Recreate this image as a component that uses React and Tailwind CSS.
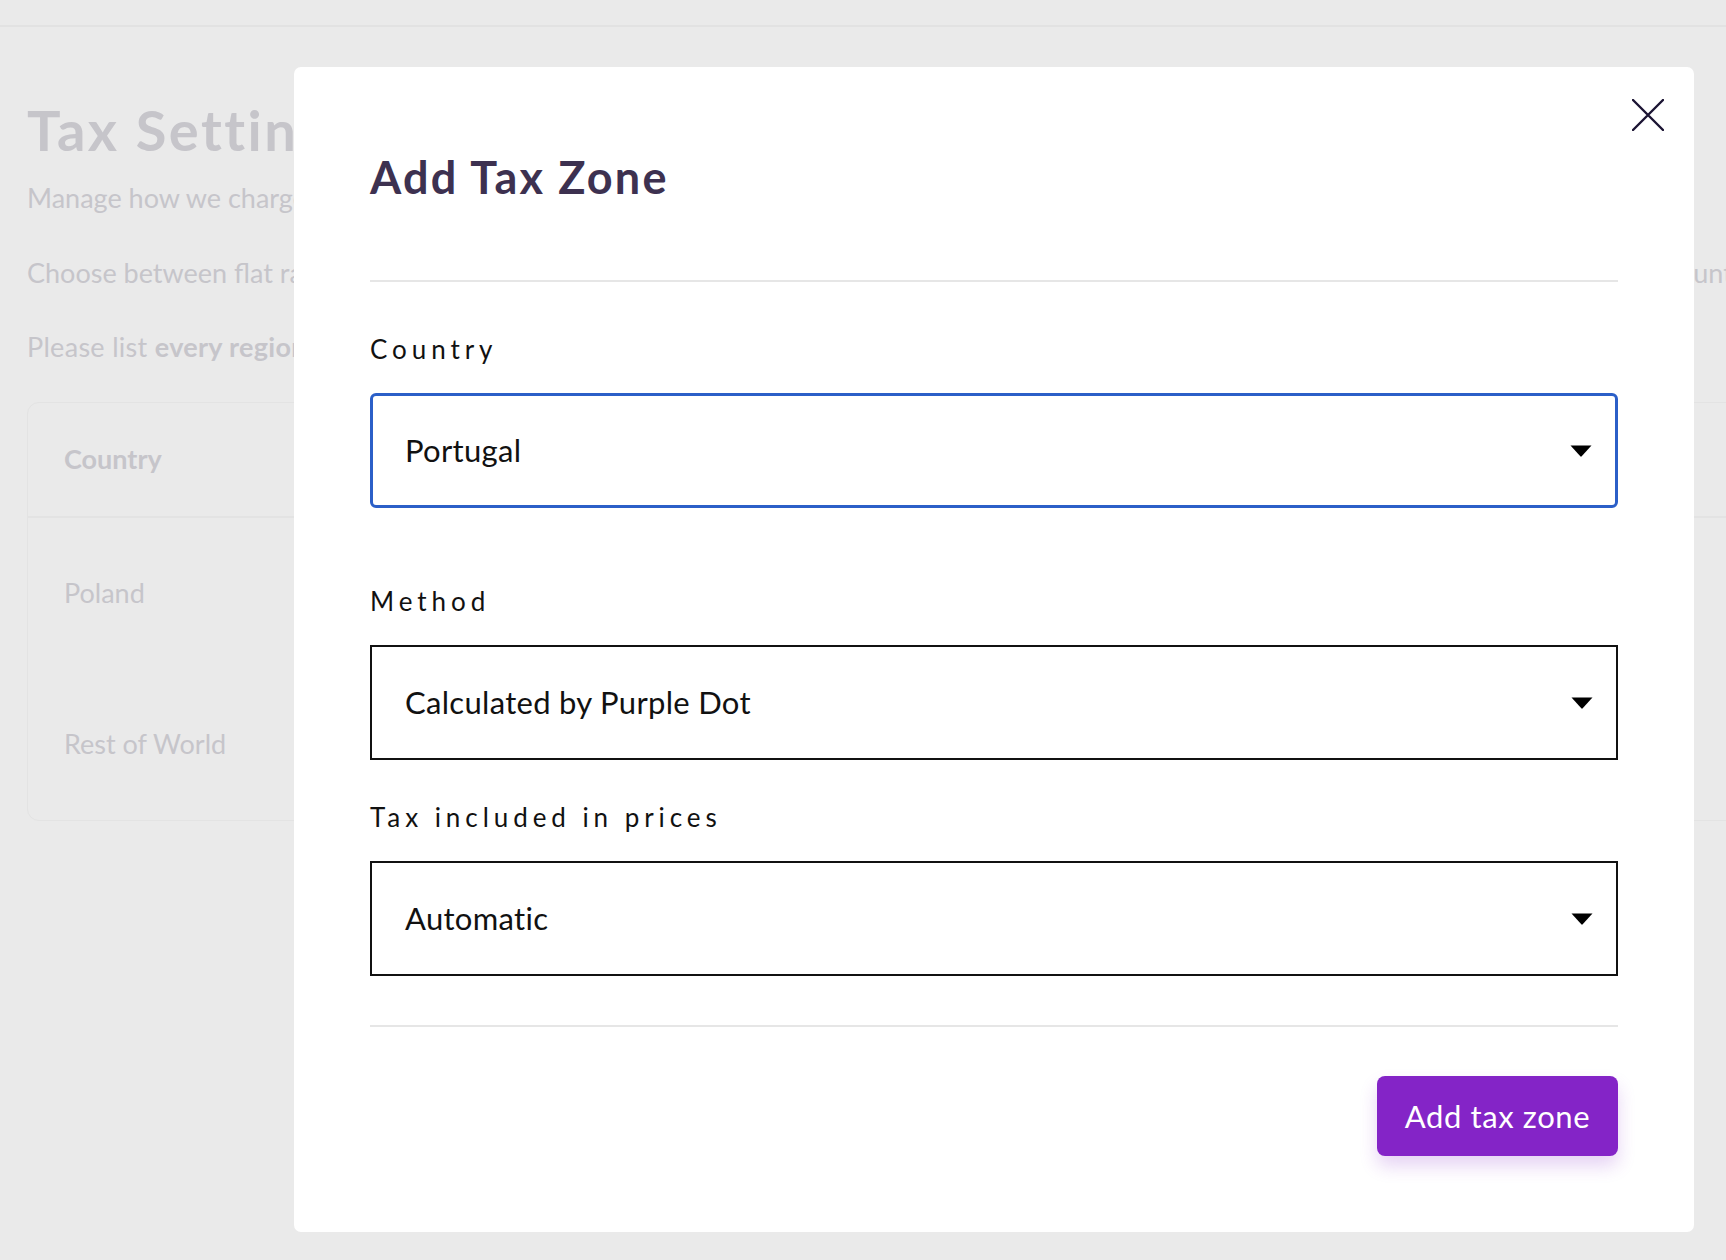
import React from "react";

const font = { fontFamily: "Lato, 'Open Sans', sans-serif" };

const Caret = () => (
  <svg width="22" height="12" viewBox="0 0 22 12" className="shrink-0">
    <path d="M0.5 0.5 H21.5 L11.7 11.3 Q11 12 10.3 11.3 Z" fill="#000" />
  </svg>
);

const Field = ({ label, value, focused, className = "" }) => (
  <div className={className}>
    <label className="block text-[26px] leading-[32px] tracking-[0.19em] text-[#111]">{label}</label>
    <div
      className={
        "mt-[28px] h-[115px] flex items-center justify-between pr-[23px] " +
        (focused
          ? "border-[3px] border-[#2b5fc8] rounded-[6px] pl-[32px]"
          : "border-2 border-[#111] pl-[33px]")
      }
    >
      <span className="text-[31px] leading-none tracking-[0.3px] text-[#111]">{value}</span>
      <Caret />
    </div>
  </div>
);

const App = () => {
  return (
    <div className="relative w-full h-[1260px] overflow-hidden bg-[#eaeaea]" style={font}>
      {/* page behind the modal */}
      <div className="h-[27px] border-b-2 border-[#e2e2e2]" />
      <div className="pl-[27px] pt-[71px] text-[#c6c5ca] whitespace-nowrap">
        <h1 className="text-[56px] leading-[64px] font-bold tracking-[2.5px]">Tax Settings</h1>
        <p className="mt-[20px] text-[27px] leading-[32px]">Manage how we charge tax on your pre-orders.</p>
        <p className="mt-[43px] text-[27px] leading-[32px]">
          Choose between flat rate tax zones or let Purple Dot calculate the correct amount of taxes automatically for every single sale based on the country
        </p>
        <p className="mt-[42px] text-[27px] leading-[32px] tracking-[0.3px]">
          Please list <span className="font-bold">every region</span> you sell to.
        </p>
        <div className="mt-[39px] w-[1760px] rounded-[12px] border border-[#e3e3e3] text-[27px]">
          <div className="h-[115px] flex items-center pl-[36px] border-b-2 border-[#e3e3e3] font-bold">
            Country
          </div>
          <div className="h-[151px] flex items-center pl-[36px]">Poland</div>
          <div className="h-[151px] flex items-center pl-[36px]">Rest of World</div>
        </div>
      </div>

      {/* modal */}
      <div className="absolute left-[294px] top-[67px] w-[1400px] bg-white rounded-[7px] px-[76px] pt-[86px] pb-[76px]">
        <button className="absolute top-[32px] right-[30px] w-[32px] h-[32px]">
          <svg width="32" height="32" viewBox="0 0 32 32">
            <path d="M1 1 L31 31 M31 1 L1 31" stroke="#1b1433" strokeWidth="2.4" strokeLinecap="round" />
          </svg>
        </button>
        <h2 className="text-[45px] leading-[48px] font-bold tracking-[2.2px] text-[#3d3150]">Add Tax Zone</h2>
        <div className="mt-[79px] h-[2px] bg-[#e6e6e6]" />

        <Field className="mt-[51px]" label="Country" value="Portugal" focused />
        <Field className="mt-[77px]" label="Method" value="Calculated by Purple Dot" />
        <Field className="mt-[41px]" label="Tax included in prices" value="Automatic" />

        <div className="mt-[49px] h-[2px] bg-[#e6e6e6]" />
        <div className="mt-[49px] flex justify-end">
          <button className="h-[80px] w-[241px] rounded-[8px] bg-[#8424c7] text-white text-[31px] tracking-[0.6px] shadow-[0_10px_18px_rgba(132,36,199,0.2)]">
            Add tax zone
          </button>
        </div>
      </div>
    </div>
  );
};

export default App;
